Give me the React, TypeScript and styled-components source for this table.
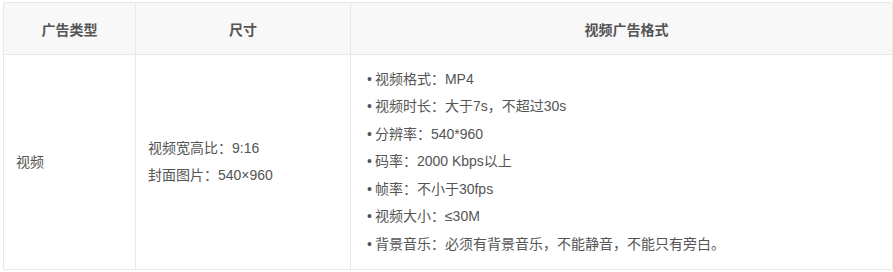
import React from "react";
import styled, { createGlobalStyle } from "styled-components";

const GlobalStyle = createGlobalStyle`
  body {
    margin: 0;
    padding: 2px 0 0 3px;
    background: #fff;
    font-family: "Liberation Sans", "Noto Sans CJK SC", sans-serif;
  }
`;

const Table = styled.table`
  border-collapse: collapse;
  width: 890px;
  table-layout: fixed;
  font-size: 14px;
  color: #555;
`;

const HeadCell = styled.th<{ $width?: number; $shift?: number }>`
  width: ${(p) => (p.$width ? `${p.$width}px` : "auto")};
  height: 51px;
  padding: 0 0 0 ${(p) => p.$shift ?? 0}px;
  background: #f8f8f8;
  border: 1px solid #e8e8e8;
  font-weight: bold;
  color: #555;
  text-align: center;
  vertical-align: middle;
`;

const Cell = styled.td`
  height: 214px;
  padding: 0 12px;
  border: 1px solid #e8e8e8;
  vertical-align: middle;
  line-height: 27px;
`;

const List = styled.ul`
  list-style: none;
  margin: 0;
  padding: 0 0 0 4px;
  line-height: 27.5px;
`;

const Item = styled.li`
  &::before {
    content: "•";
    margin-right: 3px;
  }
`;

const specs = [
  "视频格式：MP4",
  "视频时长：大于7s，不超过30s",
  "分辨率：540*960",
  "码率：2000 Kbps以上",
  "帧率：不小于30fps",
  "视频大小：≤30M",
  "背景音乐：必须有背景音乐，不能静音，不能只有旁白。",
];

const App = () => (
  <>
    <GlobalStyle />
    <Table>
      <thead>
        <tr>
          <HeadCell $width={131}>广告类型</HeadCell>
          <HeadCell $width={214}>尺寸</HeadCell>
          <HeadCell $shift={10}>视频广告格式</HeadCell>
        </tr>
      </thead>
      <tbody>
        <tr>
          <Cell>视频</Cell>
          <Cell>
            视频宽高比：9:16
            <br />
            封面图片：540×960
          </Cell>
          <Cell>
            <List>
              {specs.map((s) => (
                <Item key={s}>{s}</Item>
              ))}
            </List>
          </Cell>
        </tr>
      </tbody>
    </Table>
  </>
);

export default App;
